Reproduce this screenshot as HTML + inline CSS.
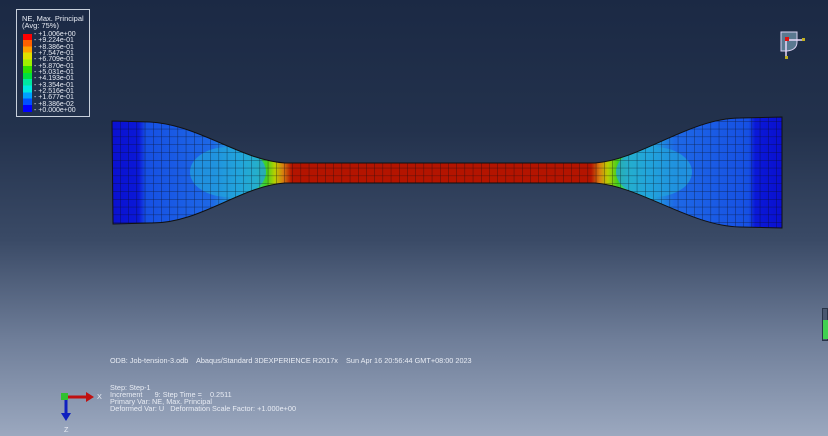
<!DOCTYPE html>
<html><head><meta charset="utf-8"><style>
html,body{margin:0;padding:0}
body{width:828px;height:436px;overflow:hidden;position:relative;background:linear-gradient(to bottom,#1b2944 0%,#23324d 30%,#3a4a66 55%,#6f7e99 78%,#9ba8bf 100%);font-family:"Liberation Sans",sans-serif;color:#e8ecf4}
.t{position:absolute;font-size:7.3px;line-height:7px;white-space:pre}
</style></head><body>
<svg width="828" height="436" style="position:absolute;left:0;top:0">
<defs>
<linearGradient id="g" gradientUnits="userSpaceOnUse" x1="112" y1="0" x2="782" y2="0">
<stop offset="0" stop-color="#0a10d0"/>
<stop offset="0.04" stop-color="#0a18d8"/>
<stop offset="0.05" stop-color="#1650e4"/>
<stop offset="0.15" stop-color="#1e68e6"/>
<stop offset="0.19" stop-color="#22b0d8"/>
<stop offset="0.215" stop-color="#30d8a0"/>
<stop offset="0.23" stop-color="#40d020"/>
<stop offset="0.243" stop-color="#b8d000"/>
<stop offset="0.255" stop-color="#d88010"/>
<stop offset="0.268" stop-color="#b41400"/>
<stop offset="0.715" stop-color="#b41400"/>
<stop offset="0.728" stop-color="#d88010"/>
<stop offset="0.74" stop-color="#b8d000"/>
<stop offset="0.755" stop-color="#40d020"/>
<stop offset="0.77" stop-color="#30d8a0"/>
<stop offset="0.8" stop-color="#22b0d8"/>
<stop offset="0.84" stop-color="#1e68e6"/>
<stop offset="0.95" stop-color="#1650e4"/>
<stop offset="0.96" stop-color="#0a18d8"/>
<stop offset="1" stop-color="#0a10d0"/>
</linearGradient>
<clipPath id="c"><path id="sp" d="M112,121 L150,122 C200,125 240,160 285,163 L595,163 C640,160 690,118 740,118 L782,117 L782,228 L740,227 C690,226 640,186 595,183 L285,183 C240,186 200,224 150,223 L113,224 Z"/></clipPath>
<pattern id="gr" width="8.2" height="7.8" patternUnits="userSpaceOnUse" x="112" y="121"><path d="M0,0V7.8M0,0H8.2" stroke="#0a0a14" stroke-width="0.8" fill="none"/></pattern>
</defs>
<g clip-path="url(#c)">
<rect x="100" y="100" width="700" height="140" fill="url(#g)"/>
<ellipse cx="228" cy="172" rx="38" ry="25" fill="#22a0dc" opacity="0.75"/>
<ellipse cx="654" cy="172" rx="38" ry="25" fill="#22a0dc" opacity="0.75"/>
<rect x="100" y="100" width="700" height="140" fill="url(#gr)" opacity="0.75"/>
</g>
<use href="#sp" fill="none" stroke="#111" stroke-width="1"/>
<line x1="66" y1="397" x2="88" y2="397" stroke="#c01010" stroke-width="3"/>
<path d="M86,392 L94,397 L86,402 Z" fill="#c01010"/>
<line x1="66" y1="397" x2="66" y2="415" stroke="#1020c0" stroke-width="3"/>
<path d="M61,413 L66,421 L71,413 Z" fill="#1020c0"/>
<rect x="61" y="393" width="7" height="7" fill="#30c030"/>
<path d="M781,32 H797 V42 Q797,50 787,51 V51 H781 Z" fill="#5a7890" stroke="#d8d0f0" stroke-width="1"/>
<line x1="786" y1="40" x2="802" y2="40" stroke="#e8d8f8" stroke-width="1.5"/>
<line x1="786" y1="40" x2="786" y2="56" stroke="#e8d8f8" stroke-width="1.5"/>
<rect x="785" y="37" width="4" height="4" fill="#e01010"/>
<rect x="802" y="38" width="3" height="3" fill="#c0b020"/>
<rect x="785" y="56" width="3" height="3" fill="#c0b020"/>
<rect x="822.5" y="308.5" width="5" height="32" fill="#4a5870" stroke="#283448"/>
<rect x="823" y="320" width="5" height="19" fill="#40d050"/>
<rect x="16.5" y="9.5" width="73" height="107" fill="none" stroke="#c8d0dc"/>
</svg>
<div class="t" style="left:22px;top:15px;font-size:7.5px">NE, Max. Principal</div>
<div class="t" style="left:22px;top:22px;font-size:7.5px">(Avg: 75%)</div>
<div style="position:absolute;left:23px;top:34px;width:9px;height:78px;background:linear-gradient(#f00 0,#f00 8%,#ff6000 8%,#ff6000 16%,#ffa000 16%,#ffa000 24%,#e0e000 24%,#e0e000 33%,#a0f000 33%,#a0f000 41%,#30e000 41%,#30e000 50%,#00e040 50%,#00e040 58%,#00e8a0 58%,#00e8a0 66%,#00e8e0 66%,#00e8e0 75%,#00a0ff 75%,#00a0ff 83%,#0050ff 83%,#0050ff 91%,#0000ff 91%)"></div>
<div class="t" style="left:34px;top:32px;line-height:6.35px;font-size:7px">- +1.006e+00
- +9.224e-01
- +8.386e-01
- +7.547e-01
- +6.709e-01
- +5.870e-01
- +5.031e-01
- +4.193e-01
- +3.354e-01
- +2.516e-01
- +1.677e-01
- +8.386e-02
- +0.000e+00</div>
<div class="t" style="left:110px;top:357px">ODB: Job-tension-3.odb    Abaqus/Standard 3DEXPERIENCE R2017x    Sun Apr 16 20:56:44 GMT+08:00 2023</div>
<div class="t" style="left:110px;top:384px">Step: Step-1
Increment      9: Step Time =    0.2511
Primary Var: NE, Max. Principal
Deformed Var: U   Deformation Scale Factor: +1.000e+00</div>
<div class="t" style="left:97px;top:393px">X</div>
<div class="t" style="left:64px;top:426px">Z</div>
</body></html>
